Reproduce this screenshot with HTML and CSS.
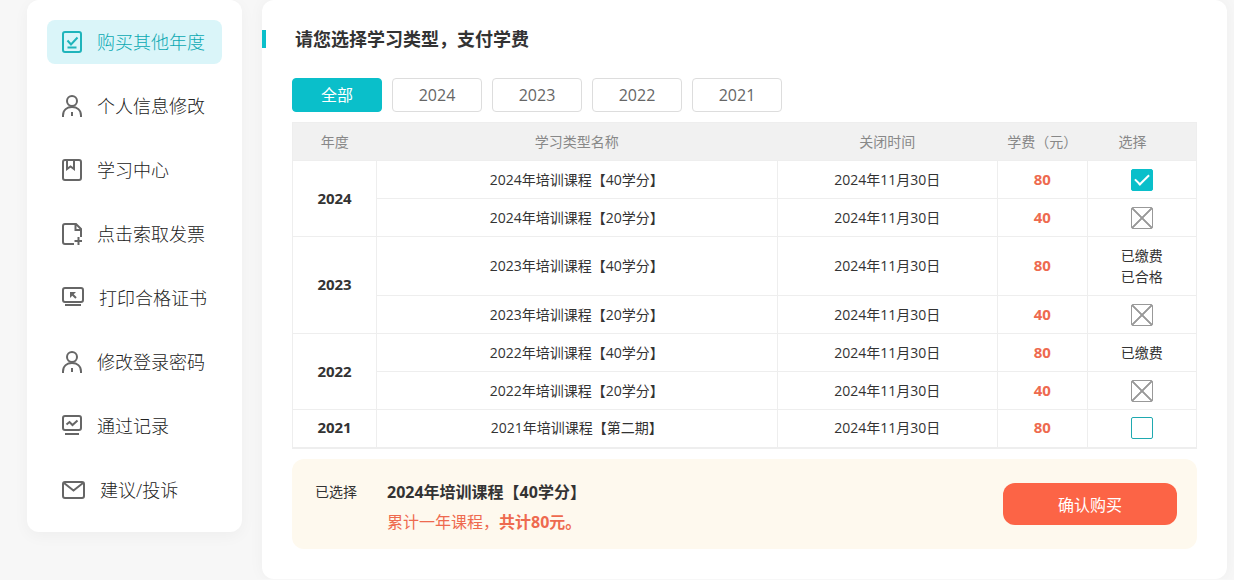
FILE: index.html
```html
<!DOCTYPE html>
<html lang="zh-CN">
<head>
<meta charset="utf-8">
<title>选择学习类型</title>
<link rel="stylesheet" href="styles.css">
</head>
<body>
<div class="layout">
  <nav class="sidebar">
    <a class="menu-item active" href="#">
      <svg width="20" height="22" viewBox="0 0 20 22"><rect x="1" y="1" width="18" height="20" rx="2"/><path d="M5.500 9.500l3.500 4L15.500 6.500M5.500 16.500h9"/></svg>
      购买其他年度</a>
    <a class="menu-item" href="#">
      <svg width="20" height="22" viewBox="0 0 20 22"><circle cx="10" cy="6" r="5"/><path d="M1 22v-1.500C1 15 5 12 10 12s9 3 9 8.500V22M10 17v4"/></svg>
      个人信息修改</a>
    <a class="menu-item" href="#">
      <svg width="20" height="22" viewBox="0 0 20 22"><rect x="1" y="1" width="18" height="20" rx="2"/><path d="M5 1v9l3.500-2.500L12 10V1"/></svg>
      学习中心</a>
    <a class="menu-item" href="#">
      <svg width="20" height="22" viewBox="0 0 20 22"><path d="M12 21H3a2 2 0 0 1-2-2V3a2 2 0 0 1 2-2h11l5 5v8M13.500 1v6H19M16.500 14v8M12.500 18h7.500"/></svg>
      点击索取发票</a>
    <a class="menu-item" href="#">
      <svg width="22" height="22" viewBox="0 0 22 22"><rect x="1" y="1" width="20" height="14" rx="2"/><path d="M3 18h16M9 6l5 5"/><path class="solid" d="M8 5h6l-6 6z"/></svg>
      打印合格证书</a>
    <a class="menu-item" href="#">
      <svg width="20" height="22" viewBox="0 0 20 22"><circle cx="10" cy="6" r="5"/><path d="M1 22v-1.500C1 15 5 12 10 12s9 3 9 8.500V22M10 17v4"/></svg>
      修改登录密码</a>
    <a class="menu-item" href="#">
      <svg width="20" height="22" viewBox="0 0 20 22"><rect x="1" y="1" width="18" height="14" rx="2"/><path d="M3 19h14M4.500 9.500l3-2.500 3 3 5-4.500"/></svg>
      通过记录</a>
    <a class="menu-item" href="#">
      <svg width="23" height="22" viewBox="0 0 23 22"><rect x="1" y="3" width="21" height="16" rx="2"/><path d="M2 4l9.500 7.500L21 4"/></svg>
      建议/投诉</a>
  </nav>

  <main class="panel">
    <h1 class="panel-title">请您选择学习类型，支付学费</h1>
    <div class="panel-body">
      <div class="filters">
        <button class="filter selected" type="button">全部</button>
        <button class="filter" type="button">2024</button>
        <button class="filter" type="button">2023</button>
        <button class="filter" type="button">2022</button>
        <button class="filter" type="button">2021</button>
      </div>

      <table class="courses">
        <colgroup>
          <col class="col-year"><col class="col-name"><col class="col-date"><col class="col-fee"><col class="col-pick">
        </colgroup>
        <thead>
          <tr><th>年度</th><th>学习类型名称</th><th>关闭时间</th><th>学费（元）</th><th class="pick-head">选择</th></tr>
        </thead>
        <tbody>
          <tr><th class="year" rowspan="2">2024</th><td>2024年培训课程【40学分】</td><td>2024年11月30日</td><td class="fee">80</td><td><input class="pick" type="checkbox" aria-label="2024年培训课程【40学分】" checked></td></tr>
          <tr><td>2024年培训课程【20学分】</td><td>2024年11月30日</td><td class="fee">40</td><td><input class="pick" type="checkbox" aria-label="2024年培训课程【20学分】" disabled></td></tr>
          <tr><th class="year" rowspan="2">2023</th><td>2023年培训课程【40学分】</td><td>2024年11月30日</td><td class="fee">80</td><td class="status">已缴费<br>已合格</td></tr>
          <tr><td>2023年培训课程【20学分】</td><td>2024年11月30日</td><td class="fee">40</td><td><input class="pick" type="checkbox" aria-label="2023年培训课程【20学分】" disabled></td></tr>
          <tr><th class="year" rowspan="2">2022</th><td>2022年培训课程【40学分】</td><td>2024年11月30日</td><td class="fee">80</td><td>已缴费</td></tr>
          <tr><td>2022年培训课程【20学分】</td><td>2024年11月30日</td><td class="fee">40</td><td><input class="pick" type="checkbox" aria-label="2022年培训课程【20学分】" disabled></td></tr>
          <tr><th class="year">2021</th><td>2021年培训课程【第二期】</td><td>2024年11月30日</td><td class="fee">80</td><td><input class="pick" type="checkbox" aria-label="2021年培训课程【第二期】"></td></tr>
        </tbody>
      </table>

      <section class="summary">
        <span class="summary-label">已选择</span>
        <div class="summary-text">
          <strong>2024年培训课程【40学分】</strong>
          <p class="total">累计一年课程，<b>共计80元。</b></p>
        </div>
        <button class="buy" type="button">确认购买</button>
      </section>
    </div>
  </main>
</div>
</body>
</html>
```

FILE: styles.css
```css
*,
*::before {
  box-sizing: border-box;
}

body {
  margin: 0;
  background: #f7f7f7;
  color: #333;
  font: 14px/20px "Open Sans", "Noto Sans CJK SC", sans-serif;
}

button {
  font-family: inherit;
  cursor: pointer;
}

.layout {
  display: flex;
  align-items: flex-start;
  gap: 20px;
  padding: 0 7px 0 27px;
}

.sidebar {
  display: flex;
  flex: none;
  flex-direction: column;
  gap: 20px;
  width: 215px;
  padding: 20px;
  border-radius: 12px;
  background: #fff;
  box-shadow: 0 4px 16px rgba(0, 0, 0, 0.04);
}

.menu-item {
  display: flex;
  align-items: center;
  gap: 15px;
  height: 44px;
  padding-left: 15px;
  border-radius: 8px;
  color: #222;
  font-size: 18px;
  font-weight: 300;
  text-decoration: none;
  white-space: nowrap;
}

.menu-item svg {
  flex: none;
  fill: none;
  stroke: #666;
  stroke-width: 2;
}

.menu-item .solid {
  fill: #666;
  stroke: none;
}

.menu-item.active {
  background: #daf5f9;
  color: #0aa9b2;
}

.menu-item.active svg {
  stroke: #1fb4bb;
}

.panel {
  flex: 1;
  min-width: 0;
  padding: 30px 0;
  border-radius: 12px;
  background: #fff;
  box-shadow: 0 0 16px rgba(0, 0, 0, 0.04);
}

.panel-title {
  margin: 0 0 30px;
  padding-left: 29px;
  border-left: 4px solid #0abfca;
  font-size: 18px;
  line-height: 18px;
}

.panel-body {
  display: flex;
  flex-direction: column;
  gap: 10px;
  padding: 0 30px;
}

.filters {
  display: flex;
  gap: 10px;
}

.filter {
  width: 90px;
  height: 34px;
  padding: 0;
  border: 1px solid #ddd;
  border-radius: 4px;
  background: #fff;
  color: #666;
  font-size: 16px;
  line-height: 32px;
}

.filter.selected {
  border-color: #0abfca;
  background: #0abfca;
  color: #fff;
}

.courses {
  width: 100%;
  border: 1px solid #eee;
  border-bottom-width: 2px;
  border-collapse: collapse;
  table-layout: fixed;
  text-align: center;
}

.col-year {
  width: 9.3%;
}

.col-name {
  width: 44.3%;
}

.col-date {
  width: 24.4%;
}

.col-fee {
  width: 9.9%;
}

.col-pick {
  width: 12.1%;
}

.courses th,
.courses td {
  height: 38px;
  padding: 0;
  border: 1px solid #eee;
}

.courses thead th {
  border: 0;
  background: #f1f1f1;
  color: #888;
  font-weight: 400;
}

.courses thead .pick-head {
  padding-right: 18px;
}

.courses .year,
.courses .fee {
  padding-bottom: 2px;
  font-size: 15px;
  font-weight: 700;
}

.courses .fee {
  color: #ee6a4f;
}

.courses .status {
  height: 59px;
  line-height: 21px;
}

.pick {
  display: inline-block;
  position: relative;
  width: 22px;
  height: 22px;
  margin: 0;
  border: 1px solid #1fa9b0;
  border-radius: 2px;
  background: #fff;
  vertical-align: middle;
  appearance: none;
}

.pick:checked {
  border-color: #0abfca;
  background: #0abfca;
}

.pick:checked::before {
  position: absolute;
  top: 4px;
  left: 3px;
  width: 14px;
  height: 8px;
  border: solid #fff;
  border-width: 0 0 2px 2px;
  content: "";
  transform: rotate(-45deg);
}

.pick:disabled {
  border-color: #999;
  background:
    linear-gradient(to top right, transparent 45%, #999 48%, #999 52%, transparent 55%),
    linear-gradient(to bottom right, transparent 45%, #999 48%, #999 52%, transparent 55%);
}

.summary {
  display: flex;
  align-items: center;
  padding: 0 20px 0 23px;
  border-radius: 12px;
  background: #fef9ee;
}

.summary-label {
  align-self: flex-start;
  width: 72px;
  padding-top: 23px;
}

.summary-text {
  flex: 1;
  padding: 18px 0 12px;
  font-size: 16px;
  line-height: 30px;
}

.total {
  margin: 0;
  color: #ee6a4f;
}

.buy {
  width: 174px;
  height: 42px;
  padding: 0;
  border: 0;
  border-radius: 12px;
  background: #fc6446;
  color: #fff;
  font-size: 16px;
}
```
